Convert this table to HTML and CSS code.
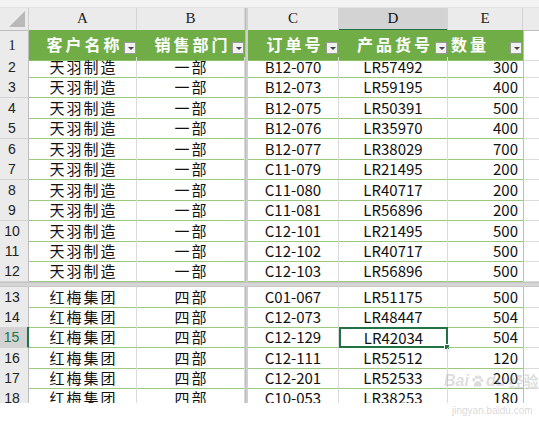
FILE: index.html
```html
<!DOCTYPE html>
<html lang="zh">
<head>
<meta charset="utf-8">
<link rel="stylesheet" href="styles.css">
</head>
<body>
<div class="page">
<div class="sheet">
  <div class="topband"></div>
  <div class="row colhead">
    <div class="corner"><span class="tri"></span></div>
    <div class="ch">A</div><div class="ch">B</div><div class="vsplit"></div>
    <div class="ch">C</div><div class="ch ch-sel">D</div><div class="ch">E</div><div class="ch ch-f"></div>
  </div>
  <div class="row r1">
    <div class="rh">1</div>
    <div class="th">客户名称<span class="fb"></span></div>
    <div class="th">销售部门<span class="fb"></span></div>
    <div class="vsplit"></div>
    <div class="th">订单号<span class="fb"></span></div>
    <div class="th">产品货号<span class="fb"></span></div>
    <div class="th th-left">数量<span class="fb"></span></div>
    <div class="cf"></div>
  </div>
  <div class="body top">
    <div class="row"><div class="rh">2</div><div class="c zh">天羽制造</div><div class="c zh">一部</div><div class="vsplit"></div><div class="c">B12-070</div><div class="c">LR57492</div><div class="c num">300</div><div class="cf"></div></div>
    <div class="row"><div class="rh">3</div><div class="c zh">天羽制造</div><div class="c zh">一部</div><div class="vsplit"></div><div class="c">B12-073</div><div class="c">LR59195</div><div class="c num">400</div><div class="cf"></div></div>
    <div class="row"><div class="rh">4</div><div class="c zh">天羽制造</div><div class="c zh">一部</div><div class="vsplit"></div><div class="c">B12-075</div><div class="c">LR50391</div><div class="c num">500</div><div class="cf"></div></div>
    <div class="row"><div class="rh">5</div><div class="c zh">天羽制造</div><div class="c zh">一部</div><div class="vsplit"></div><div class="c">B12-076</div><div class="c">LR35970</div><div class="c num">400</div><div class="cf"></div></div>
    <div class="row"><div class="rh">6</div><div class="c zh">天羽制造</div><div class="c zh">一部</div><div class="vsplit"></div><div class="c">B12-077</div><div class="c">LR38029</div><div class="c num">700</div><div class="cf"></div></div>
    <div class="row"><div class="rh">7</div><div class="c zh">天羽制造</div><div class="c zh">一部</div><div class="vsplit"></div><div class="c">C11-079</div><div class="c">LR21495</div><div class="c num">200</div><div class="cf"></div></div>
    <div class="row"><div class="rh">8</div><div class="c zh">天羽制造</div><div class="c zh">一部</div><div class="vsplit"></div><div class="c">C11-080</div><div class="c">LR40717</div><div class="c num">200</div><div class="cf"></div></div>
    <div class="row"><div class="rh">9</div><div class="c zh">天羽制造</div><div class="c zh">一部</div><div class="vsplit"></div><div class="c">C11-081</div><div class="c">LR56896</div><div class="c num">200</div><div class="cf"></div></div>
    <div class="row"><div class="rh">10</div><div class="c zh">天羽制造</div><div class="c zh">一部</div><div class="vsplit"></div><div class="c">C12-101</div><div class="c">LR21495</div><div class="c num">500</div><div class="cf"></div></div>
    <div class="row"><div class="rh">11</div><div class="c zh">天羽制造</div><div class="c zh">一部</div><div class="vsplit"></div><div class="c">C12-102</div><div class="c">LR40717</div><div class="c num">500</div><div class="cf"></div></div>
    <div class="row"><div class="rh">12</div><div class="c zh">天羽制造</div><div class="c zh">一部</div><div class="vsplit"></div><div class="c">C12-103</div><div class="c">LR56896</div><div class="c num">500</div><div class="cf"></div></div>
  </div>
  <div class="hsplit"></div>
  <div class="body bottom">
    <div class="row"><div class="rh">13</div><div class="c zh">红梅集团</div><div class="c zh">四部</div><div class="vsplit"></div><div class="c">C01-067</div><div class="c">LR51175</div><div class="c num">500</div><div class="cf"></div></div>
    <div class="row"><div class="rh">14</div><div class="c zh">红梅集团</div><div class="c zh">四部</div><div class="vsplit"></div><div class="c">C12-073</div><div class="c">LR48447</div><div class="c num">504</div><div class="cf"></div></div>
    <div class="row"><div class="rh rh-sel">15</div><div class="c zh">红梅集团</div><div class="c zh">四部</div><div class="vsplit"></div><div class="c">C12-129</div><div class="c sel">LR42034<span class="handle"></span></div><div class="c num">504</div><div class="cf"></div></div>
    <div class="row"><div class="rh">16</div><div class="c zh">红梅集团</div><div class="c zh">四部</div><div class="vsplit"></div><div class="c">C12-111</div><div class="c">LR52512</div><div class="c num">120</div><div class="cf"></div></div>
    <div class="row"><div class="rh">17</div><div class="c zh">红梅集团</div><div class="c zh">四部</div><div class="vsplit"></div><div class="c">C12-201</div><div class="c">LR52533</div><div class="c num">200</div><div class="cf"></div></div>
    <div class="row"><div class="rh">18</div><div class="c zh">红梅集团</div><div class="c zh">四部</div><div class="vsplit"></div><div class="c">C10-053</div><div class="c">LR38253</div><div class="c num">180</div><div class="cf"></div></div>
  </div>
</div>
<div class="wm">
  <div class="wm-logo">Bai<svg class="paw" viewBox="0 0 24 24" width="15" height="15"><ellipse cx="6" cy="9" rx="2.4" ry="3"/><ellipse cx="10.5" cy="5" rx="2.4" ry="3"/><ellipse cx="15.5" cy="5.5" rx="2.4" ry="3"/><ellipse cx="19" cy="10" rx="2.3" ry="2.8"/><path d="M12.5 11c-4 0-7 4.5-6.2 7.5.8 2.8 4.2 1.6 6.2 1.6s5.4 1.2 6.2-1.6c.8-3-2.2-7.5-6.2-7.5z"/></svg>du<span class="wm-cn">经验</span></div>
  <div class="wm-url">jingyan.baidu.com</div>
</div>
</div>
</body>
</html>
```
FILE: styles.css
```css
* { box-sizing: border-box; }
html, body { margin: 0; padding: 0; background: #fff; }
body { font-family: "Noto Sans CJK SC", "Liberation Sans", sans-serif; color: #111; }

.page { position: relative; width: 539px; height: 429px; }
.sheet {
  width: 539px;
  height: 403px;
  overflow: hidden;
  background: #fff;
}
.topband { height: 8px; background: #f3f3f3; border-bottom: 1px solid #e2e2e2; }

.row {
  display: grid;
  grid-template-columns: 29px 108px 108px 3px 91px 109px 75px 16px;
  height: 20.45px;
}
.bottom .row { height: 20.3px; }

.vsplit { background: #cfcfcf; border-left: 1px solid #bdbdbd; }
.hsplit { height: 5px; background: #d6d6d6; border-top: 1px solid #c4c4c4; border-bottom: 1px solid #c8c8c8; }

/* column header */
.colhead { height: 22px; background: #ebebeb; }
.corner { position: relative; border-right: 1px solid #cfcfcf; border-bottom: 1px solid #bdbdbd; }
.tri {
  position: absolute; right: 3px; bottom: 3px;
  width: 0; height: 0;
  border-left: 16px solid transparent;
  border-bottom: 16px solid #b9b9b9;
}
.ch {
  font-family: "Liberation Serif", serif;
  font-size: 15px;
  color: #222;
  text-align: center;
  line-height: 21px;
  border-right: 1px solid #d4d4d4;
  border-bottom: 1px solid #bdbdbd;
}
.ch-sel { background: #d3d3d3; border-bottom: 2px solid #217346; color: #111; }
.ch-f { border-right: none; }

/* row header */
.rh {
  background: #ebebeb;
  font-family: "Liberation Sans", sans-serif;
  font-size: 14px;
  color: #222;
  text-align: center;
  padding-right: 4px;
  line-height: 20px;
  border-right: 1px solid #bdbdbd;
  border-bottom: 1px solid #d4d4d4;
}
.rh-sel { background: #d3d3d3; color: #217346; border-right: 2px solid #217346; }

/* header row 1 */
.r1 { height: 27px; }
.r1 .rh { line-height: 30px; font-family: "Liberation Serif", serif; font-size: 15px; }
.th {
  position: relative;
  background: #70ad47;
  color: #fff;
  font-weight: 700;
  font-size: 16px;
  letter-spacing: 3px;
  padding-left: 3px;
  text-align: center;
  line-height: 28px;
  border-bottom: 1px solid #8cc168;
}
.th-left { text-align: left; padding-left: 3px; }
.fb {
  position: absolute;
  right: 1px;
  top: 12px;
  width: 12px;
  height: 12px;
  background: #f1f1f1;
  border: 1px solid #9a9a9a;
}
.fb::after {
  content: "";
  position: absolute;
  left: 3px; top: 4px;
  border-left: 3px solid transparent;
  border-right: 3px solid transparent;
  border-top: 3px solid #444;
}
.cf { border-bottom: 1px solid #dcdcdc; border-left: 1px solid #a9d08e; }

/* data cells */
.c {
  position: relative;
  font-size: 15px;
  line-height: 20px;
  text-align: center;
  color: #111;
  border-right: 1px solid #dadada;
  border-bottom: 1px solid #9cc97d;
  white-space: nowrap;
}
.c.zh { letter-spacing: 2px; padding-left: 2px; font-size: 15px; }
.c.num { text-align: right; padding-right: 5px; border-right: none; }

.sel { border: 2px solid #217346; line-height: 17px; }
.handle {
  position: absolute;
  right: -4px; bottom: -4px;
  width: 6px; height: 6px;
  background: #217346;
  border: 1px solid #fff;
}

/* watermark */
.wm {
  position: absolute;
  left: 444px; top: 370px;
  white-space: nowrap;
  color: rgba(140,140,140,0.3);
  font-family: "Liberation Sans", sans-serif;
  pointer-events: none;
}
.wm-logo {
  display: flex; align-items: center;
  font-weight: 700;
  font-size: 16px;
  font-style: italic;
  line-height: 22px;
}
.wm-cn { font-family: "Noto Sans CJK SC", sans-serif; font-style: normal; font-size: 15px; margin-left: 3px; }
.paw { fill: rgba(140,140,140,0.3); margin: 0 1px; }
.wm-url {
  margin-top: 13px;
  margin-left: 8px;
  font-size: 10px;
  line-height: 12px;
  color: rgba(140,140,140,0.35);
}
```
